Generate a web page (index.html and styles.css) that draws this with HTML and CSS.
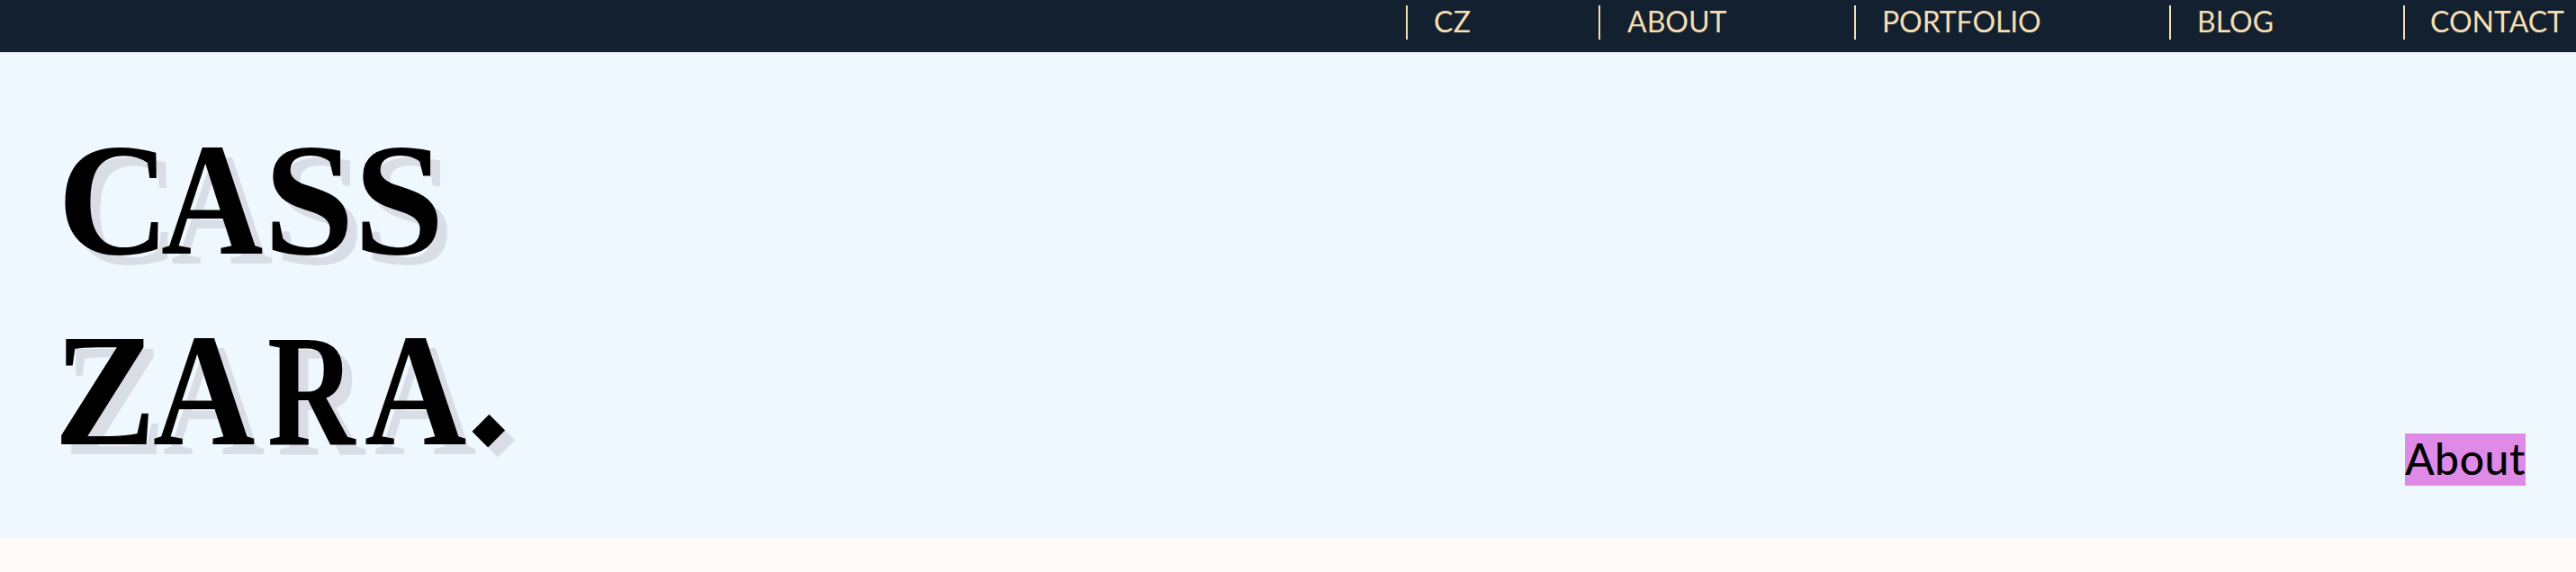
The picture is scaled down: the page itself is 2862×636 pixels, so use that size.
FILE: index.html
```html
<!DOCTYPE html>
<html lang="en">
<head>
<meta charset="utf-8">
<title>Cass Zara</title>
<link rel="stylesheet" href="styles.css">
</head>
<body>
<nav class="nav">
  <a class="nav-item cz">CZ</a>
  <a class="nav-item about">ABOUT</a>
  <a class="nav-item portfolio">PORTFOLIO</a>
  <a class="nav-item blog">BLOG</a>
  <a class="nav-item contact">CONTACT</a>
</nav>
<header class="hero">
  <h1 class="logo">
    <span class="word first"><span class="c">C</span><span class="a1">A</span><span class="s">S</span><span class="s">S</span></span>
    <span class="word second"><span class="z">Z</span><span class="a2">A</span><span class="r">R</span><span class="a3">A</span><span class="dot">.</span></span>
  </h1>
  <h2 class="page-title">About</h2>
</header>
</body>
</html>
```
FILE: styles.css
```css
* { box-sizing: border-box; }
body { margin: 0; height: 636px; background: #fffaf8; font-family: Lato, sans-serif; overflow: hidden; }
.nav { display: flex; justify-content: flex-end; height: 58px; padding-top: 6px; background: #13202f; }
.nav-item { height: 38px; padding-left: 29px; border-left: 2px solid #f5deb3; color: #f5deb3; font-size: 32px; line-height: 36px; white-space: nowrap; }
.cz { width: 214px; letter-spacing: .3px; }
.about { width: 284px; padding-left: 30px; }
.portfolio { width: 350px; letter-spacing: -0.1px; }
.blog { width: 260px; letter-spacing: 0; }
.contact { width: 192px; padding-left: 28px; }
.hero { display: flex; justify-content: space-between; align-items: flex-end; height: 540px; padding: 58px 56px 58px 60px; background: #f0f8ff; }
.logo { align-self: flex-start; margin: 0; color: #000; font: bold 178px/212px "Liberation Serif", serif; filter: drop-shadow(11px 11px 0 #d9dde5); }
.word { display: flex; height: 212px; }
.first { padding-left: 4px; }
.word span { display: block; transform-origin: 0 50%; }
.c { width: 115.2px; transform: scaleX(.97); }
.a1 { width: 114.2px; transform: scaleX(.882); }
.s { width: 99.5px; transform: scaleX(1.018); }
.z { width: 110.2px; transform: scaleX(.956); }
.a2 { width: 126.6px; transform: scaleX(.882); }
.r { width: 108.4px; transform: scaleX(.758); }
.a3 { width: 120px; transform: scaleX(.882); }
/* the full stop is a square turned onto its corner */
.word .dot { width: 36px; height: 36px; margin: 108px 0 0 25px; font: bold 142px/36px "DejaVu Sans", sans-serif; text-indent: -9px; transform-origin: 50% 50%; transform: rotate(45deg); }
.page-title { margin: 0; height: 58px; background: #e08ae8; color: #000; font-size: 48px; font-weight: 500; line-height: 55px; letter-spacing: .6px; }
```
